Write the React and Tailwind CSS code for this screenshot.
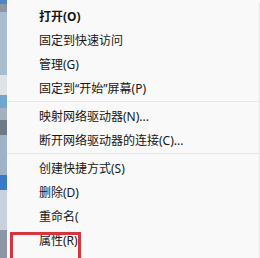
const groups = [
  [
    { label: "打开(O)", bold: true },
    { label: "固定到快速访问" },
    { label: "管理(G)" },
    { label: "固定到“开始”屏幕(P)" },
  ],
  [
    { label: "映射网络驱动器(N)..." },
    { label: "断开网络驱动器的连接(C)..." },
  ],
  [
    { label: "创建快捷方式(S)" },
    { label: "删除(D)" },
    { label: "重命名(" },
    { label: "属性(R)" },
  ],
];

function MenuItem({ item }) {
  return (
    <div
      className={`h-6 flex items-center pl-8 text-[12px] text-[#161616] whitespace-nowrap ${
        item.bold ? "font-bold" : ""
      }`}
    >
      {item.label}
    </div>
  );
}

export default function App() {
  return (
    <div
      className="relative w-[260px] h-[258px] overflow-hidden flex bg-[#f9f9f9]"
      style={{ fontFamily: '"Noto Sans", "Noto Sans CJK SC", sans-serif' }}
    >
      {/* desktop strip behind the menu */}
      <div className="w-[7px] flex flex-col shrink-0">
        <div className="h-[4px] bg-[#4d86c6]" />
        <div className="h-[8px] bg-[#8d97a3]" />
        <div className="h-[63px] bg-[#a9bdd0]" />
        <div className="h-[20px] bg-[#dfe3e8]" />
        <div className="h-[13px] bg-[#6fa6d0]" />
        <div className="h-[12px] bg-[#a3b0bd]" />
        <div className="h-[15px] bg-[#707a86]" />
        <div className="h-[40px] bg-[#9fb3c8]" />
        <div className="h-[15px] bg-[#3a78c8]" />
        <div className="h-[40px] bg-[#c9d2dc]" />
        <div className="flex-1 bg-[#8a96a3]" />
      </div>

      {/* context menu */}
      <div className="flex-1 mt-[2px] rounded-tl-[8px] bg-[#f9f9f9] border-r border-[#e8e8e8] pt-[3px]">
        {groups.map((group, gi) => (
          <div key={gi}>
            {gi > 0 && (
              <div className="h-[4px]">
                <div className="h-px bg-[#e6e6e6]" />
              </div>
            )}
            {group.map((item) => (
              <MenuItem key={item.label} item={item} />
            ))}
          </div>
        ))}
      </div>

      {/* red highlight annotation */}
      <div className="absolute left-[10px] top-[232px] w-[71px] h-[34px] border-[3px] border-[#d8343e]" />
    </div>
  );
}
